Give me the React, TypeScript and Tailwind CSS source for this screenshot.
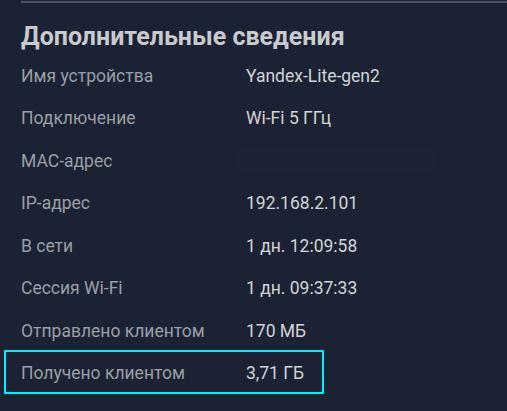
import React from "react";

interface Row {
  label: string;
  value: string;
  hidden?: boolean;
}

const rows: Row[] = [
  { label: "Имя устройства", value: "Yandex-Lite-gen2" },
  { label: "Подключение", value: "Wi-Fi 5 ГГц" },
  { label: "MAC-адрес", value: "", hidden: true },
  { label: "IP-адрес", value: "192.168.2.101" },
  { label: "В сети", value: "1 дн. 12:09:58" },
  { label: "Сессия Wi-Fi", value: "1 дн. 09:37:33" },
  { label: "Отправлено клиентом", value: "170 МБ" },
  { label: "Получено клиентом", value: "3,71 ГБ" },
];

const App: React.FC = () => {
  return (
    <div
      className="w-[507px] h-[411px] overflow-hidden bg-[#1b2233] pt-px"
      style={{ fontFamily: "Roboto, 'Liberation Sans', sans-serif" }}
    >
      <div className="ml-[21px] border-t-2 border-[#4b5262]">
        <h2 className="pt-[18.5px] mb-[3px] text-[25px] leading-[30px] font-bold text-[#c9cacd]">
          Дополнительные сведения
        </h2>
        <div className="flex flex-col">
          {rows.map((row, i) => (
            <div key={i} className="relative flex items-center h-[42.5px]">
              <span className="w-[225px] text-[17.5px] leading-6 text-[#9b9fa6]">
                {row.label}
              </span>
              {row.hidden ? (
                <span className="h-6 w-[200px] -ml-[10px] bg-[#1c2335]" />
              ) : (
                <span className="text-[17.5px] leading-6 text-[#d3d4d6]">
                  {row.value}
                </span>
              )}
              {i === rows.length - 1 && (
                <div className="absolute left-[-17px] top-[-2px] w-[320px] h-[44px] border-2 border-[#00f0ff]" />
              )}
            </div>
          ))}
        </div>
      </div>
    </div>
  );
};

export default App;
